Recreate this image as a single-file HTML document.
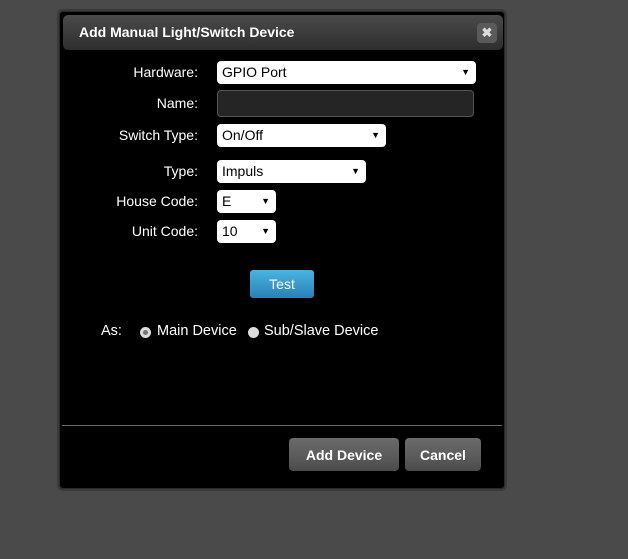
<!DOCTYPE html>
<html><head><style>
body{margin:0;width:628px;height:559px;background:#4a4a4a;font-family:"Liberation Sans",sans-serif;position:relative;overflow:hidden}
.dlg{position:absolute;left:59px;top:11px;width:444px;height:476px;background:#000;border:1px solid #2a2a2a;border-radius:4px;box-shadow:0 0 0 2px #3a3a3a}
.title{position:absolute;left:3px;top:3px;width:440px;height:35px;background:linear-gradient(#4a4a4a,#2e2e2e);border-radius:5px;color:#fff;font-weight:bold;font-size:14px;line-height:35px;text-indent:16px}
.x{position:absolute;right:6px;top:8px;width:20px;height:20px;background:#5a5a5a;border-radius:4px;color:#ddd;font-size:13px;line-height:20px;text-align:center;text-indent:0}
.lbl{position:absolute;right:430px;color:#fff;font-size:14px;text-align:right;white-space:nowrap}
.sel{position:absolute;left:217px;background:#fff;border-radius:4px;color:#000;font-size:14px;box-sizing:border-box;padding-left:5px;line-height:22px;height:23px}
.sel:after{content:"▼";position:absolute;right:6px;top:0;font-size:9px}
.inp{position:absolute;left:217px;top:90px;width:257px;height:27px;background:#252525;border:1px solid #555;border-radius:4px;box-sizing:border-box}
.test{position:absolute;left:250px;top:270px;width:64px;height:28px;border-radius:3px;background:linear-gradient(#4ab4e0,#2a80b8);color:#fff;font-size:14px;text-align:center;line-height:28px}
.txt{position:absolute;color:#fff;font-size:14.5px;white-space:nowrap}
.rad{position:absolute;width:11px;height:11px;border-radius:50%;background:#ddd;top:327px}
.sep{position:absolute;left:62px;top:425px;width:440px;height:1px;background:#666}
.btn{position:absolute;top:438px;height:33px;border-radius:4px;background:linear-gradient(#6a6a6a,#5a5a5a 60%,#4a4a4a);color:#fff;font-weight:bold;font-size:14px;text-align:center;line-height:35px}
</style></head><body>
<div class="dlg"><div class="title">Add Manual Light/Switch Device<div class="x">✖</div></div></div>
<div class="lbl" style="top:64px">Hardware:</div>
<div class="sel" style="top:61px;width:259px">GPIO Port</div>
<div class="lbl" style="top:95px">Name:</div>
<div class="inp"></div>
<div class="lbl" style="top:127px">Switch Type:</div>
<div class="sel" style="top:124px;width:169px">On/Off</div>
<div class="lbl" style="top:163px">Type:</div>
<div class="sel" style="top:160px;width:149px">Impuls</div>
<div class="lbl" style="top:193px">House Code:</div>
<div class="sel" style="top:190px;width:59px">E</div>
<div class="lbl" style="top:223px">Unit Code:</div>
<div class="sel" style="top:220px;width:59px">10</div>
<div class="test">Test</div>
<div class="txt" style="left:101px;top:323px">As:</div>
<div class="rad" style="left:140px"><div style="position:absolute;left:3px;top:3px;width:5px;height:5px;border-radius:50%;background:#777"></div></div>
<div class="txt" style="left:157px;top:323px">Main Device</div>
<div class="rad" style="left:248px"></div>
<div class="txt" style="left:264px;top:323px">Sub/Slave Device</div>
<div class="sep"></div>
<div class="btn" style="left:289px;width:110px">Add Device</div>
<div class="btn" style="left:405px;width:76px">Cancel</div>
</body></html>
